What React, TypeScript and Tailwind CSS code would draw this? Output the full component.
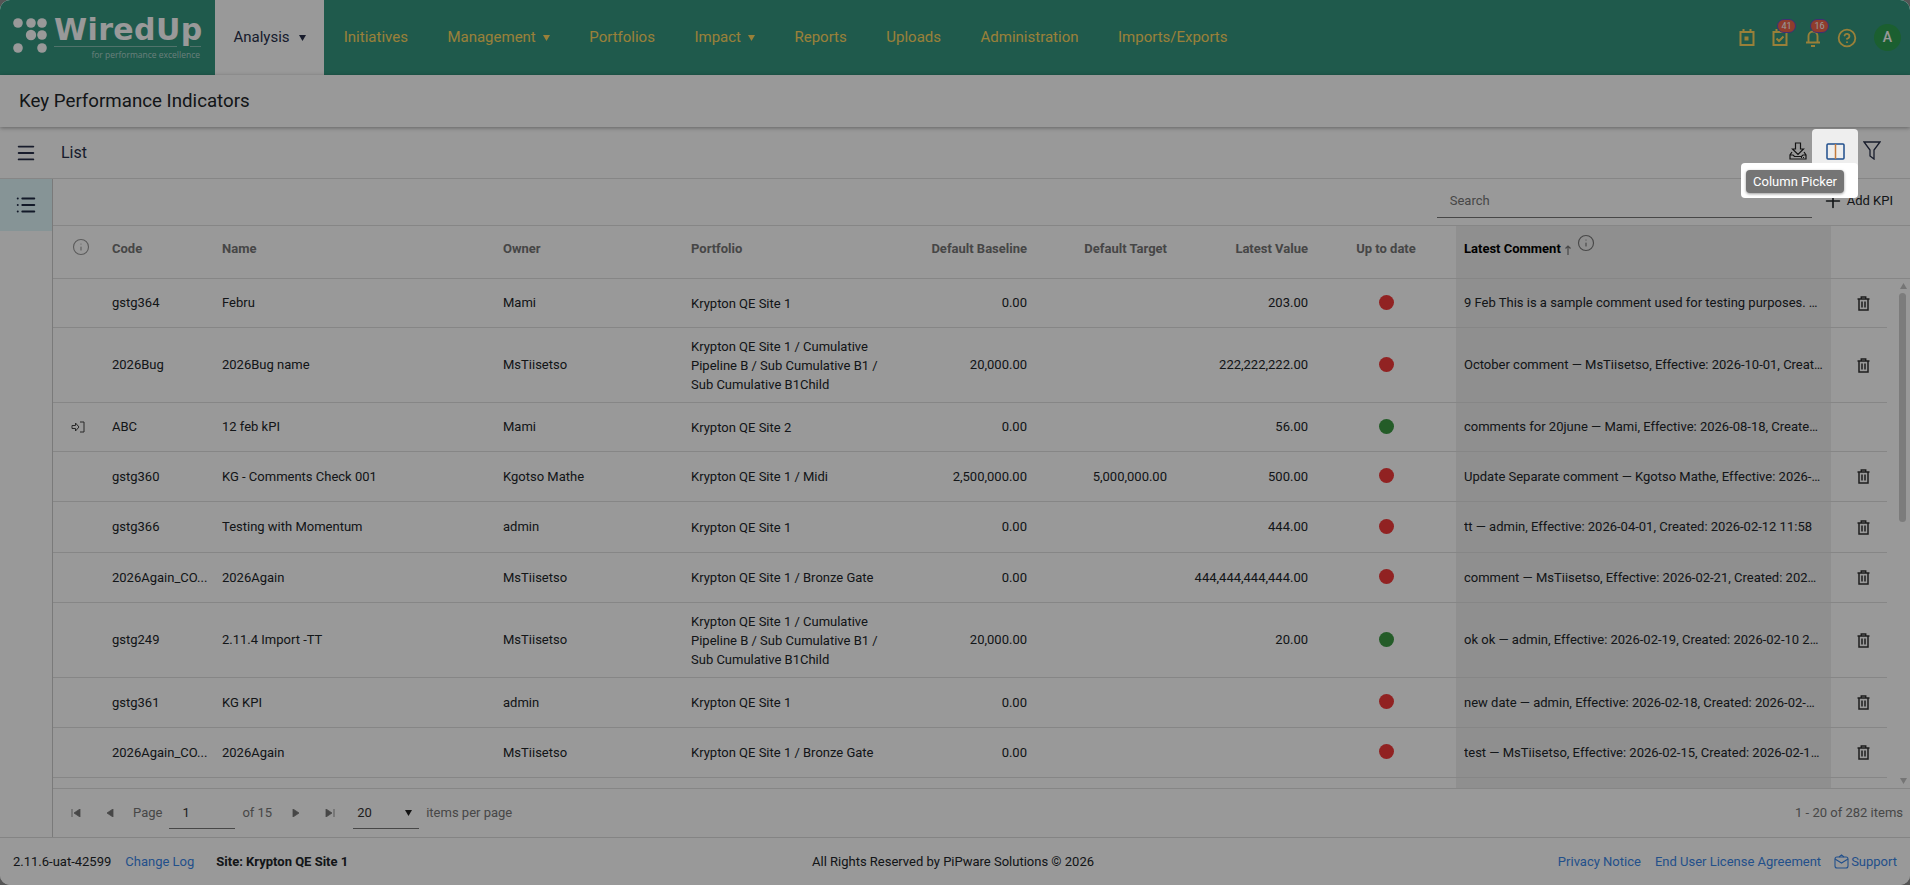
import { CircleHelp, Info, List, Menu, Plus } from "lucide-react";

const cols = "grid grid-cols-[47px_110px_281px_188px_224px_136px_140px_141px_136px_375px_56px]";

const rows = [
  { code: "gstg364", name: "Febru", owner: "Mami", portfolio: ["Krypton QE Site 1"], base: "0.00", target: "", value: "203.00", ok: false, comment: "9 Feb This is a sample comment used for testing purposes. This comment is long", h: "h-[49px]" },
  { code: "2026Bug", name: "2026Bug name", owner: "MsTiisetso", portfolio: ["Krypton QE Site 1 / Cumulative", "Pipeline B / Sub Cumulative B1 /", "Sub Cumulative B1Child"], base: "20,000.00", target: "", value: "222,222,222.00", ok: false, comment: "October comment — MsTiisetso, Effective: 2026-10-01, Created: 2026-02-10", h: "h-[75px]" },
  { code: "ABC", name: "12 feb kPI", owner: "Mami", portfolio: ["Krypton QE Site 2"], base: "0.00", target: "", value: "56.00", ok: true, comment: "comments for 20june — Mami, Effective: 2026-08-18, Created: 2026-02-10", h: "h-[49px]", linked: true },
  { code: "gstg360", name: "KG - Comments Check 001", owner: "Kgotso Mathe", portfolio: ["Krypton QE Site 1 / Midi"], base: "2,500,000.00", target: "5,000,000.00", value: "500.00", ok: false, comment: "Update Separate comment — Kgotso Mathe, Effective: 2026-02-12, Created", h: "h-[50px]" },
  { code: "gstg366", name: "Testing with Momentum", owner: "admin", portfolio: ["Krypton QE Site 1"], base: "0.00", target: "", value: "444.00", ok: false, comment: "tt — admin, Effective: 2026-04-01, Created: 2026-02-12 11:58", h: "h-[51px]" },
  { code: "2026Again_CO...", name: "2026Again", owner: "MsTiisetso", portfolio: ["Krypton QE Site 1 / Bronze Gate"], base: "0.00", target: "", value: "444,444,444,444.00", ok: false, comment: "comment — MsTiisetso, Effective: 2026-02-21, Created: 2026-02-10 12:00:00", h: "h-[50px]" },
  { code: "gstg249", name: "2.11.4 Import -TT", owner: "MsTiisetso", portfolio: ["Krypton QE Site 1 / Cumulative", "Pipeline B / Sub Cumulative B1 /", "Sub Cumulative B1Child"], base: "20,000.00", target: "", value: "20.00", ok: true, comment: "ok ok — admin, Effective: 2026-02-19, Created: 2026-02-10 21:14:00 and more", h: "h-[75px]" },
  { code: "gstg361", name: "KG KPI", owner: "admin", portfolio: ["Krypton QE Site 1"], base: "0.00", target: "", value: "", ok: false, comment: "new date — admin, Effective: 2026-02-18, Created: 2026-02-…", h: "h-[50px]" },
  { code: "2026Again_CO...", name: "2026Again", owner: "MsTiisetso", portfolio: ["Krypton QE Site 1 / Bronze Gate"], base: "0.00", target: "", value: "", ok: false, comment: "test — MsTiisetso, Effective: 2026-02-15, Created: 2026-02-10 12:00:00 more", h: "h-[50px]" },
];

const nav = [
  { label: "Initiatives" },
  { label: "Management", caret: true },
  { label: "Portfolios" },
  { label: "Impact", caret: true },
  { label: "Reports" },
  { label: "Uploads" },
  { label: "Administration" },
  { label: "Imports/Exports" },
];

function Caret({ className }: { className: string }) {
  return (
    <svg width="7" height="6" viewBox="0 0 7 6" className={className}>
      <path d="M0 0h7L3.5 6z" fill="currentColor" />
    </svg>
  );
}

function Logo() {
  return (
    <div className="relative w-[215px] h-[75px] shrink-0">
      <svg width="50" height="50" viewBox="0 0 50 50" className="absolute left-[11px] top-[16px] text-white">
        <g fill="currentColor">
          <circle cx="7" cy="7" r="4.8" />
          <circle cx="20" cy="7" r="4.8" />
          <circle cx="31" cy="7" r="4.8" />
          <circle cx="20" cy="19" r="5.2" />
          <circle cx="31" cy="19" r="4.8" />
          <circle cx="7" cy="32" r="4.8" />
          <circle cx="31" cy="32" r="4.8" />
        </g>
      </svg>
      <span className="absolute left-[54px] top-[12px] font-['DejaVu_Sans',sans-serif] font-bold text-[30px] leading-[36px] tracking-[0.4px] text-white">WiredUp</span>
      <div className="absolute left-[54px] top-[46px] w-[123px] h-px bg-white/40" />
      <div className="absolute left-[190px] top-[46px] w-[11px] h-px bg-white/40" />
      <span className="absolute right-[15px] top-[49px] font-['Open_Sans',sans-serif] text-[8.5px] leading-[12px] text-white/60">for performance excellence</span>
    </div>
  );
}

function Badge({ text }: { text: string }) {
  return (
    <span className="absolute left-[6px] -top-[10px] w-[19px] h-[14px] rounded-full bg-[#f0654a] border border-[#6a4fc0] text-white text-[9px] leading-[12px] text-center">
      {text}
    </span>
  );
}

function HeaderIcons() {
  return (
    <div className="ml-auto flex items-center text-[#ffd65f]">
      <svg width="18" height="18" viewBox="0 0 18 18" fill="none" stroke="currentColor" strokeWidth="2" className="mr-[15px]">
        <rect x="2.5" y="3" width="13" height="13" />
        <path d="M5.5 0v3M12.5 0v3" />
        <rect x="6.5" y="7.5" width="4" height="4" fill="currentColor" stroke="none" />
      </svg>
      <div className="relative mr-[15px]">
        <svg width="18" height="18" viewBox="0 0 18 18" fill="none" stroke="currentColor" strokeWidth="2" className="block">
          <rect x="2.5" y="3" width="13" height="13" />
          <path d="M5.5 0v3M12.5 0v3" />
          <path d="M5.5 9.5l2.5 2.5 4.5-4.5" />
        </svg>
        <Badge text="41" />
      </div>
      <div className="relative mr-[15px]">
        <svg width="18" height="18" viewBox="0 0 18 18" fill="none" stroke="currentColor" strokeWidth="1.9" className="block">
          <path d="M4.5 13V7a4.5 4.5 0 0 1 9 0v6M2 13.5h14M7 17h4" />
          <path d="M9 0v2.5" />
        </svg>
        <Badge text="16" />
      </div>
      <CircleHelp size={20} strokeWidth={2.2} className="mr-[17px]" />
      <div className="w-[27px] h-[27px] rounded-full bg-[#2e9e50] text-white text-[14px] font-medium flex items-center justify-center">A</div>
    </div>
  );
}

function TrashIcon() {
  return (
    <svg width="13" height="15" viewBox="0 0 13 15" fill="none" stroke="currentColor" strokeWidth="1.5">
      <path d="M0.5 3h12M4.3 3V1h4.4v2M2 3v11h9V3M5 5.5v6M8 5.5v6" />
    </svg>
  );
}

function Pager({ d }: { d: string }) {
  return (
    <svg width="10" height="8" viewBox="0 0 10 8" fill="currentColor" stroke="currentColor" strokeWidth="0.8">
      <path d={d} />
    </svg>
  );
}

export default function App() {
  return (
    <div className="relative w-[1910px] h-[885px] overflow-hidden bg-[#555] font-['Roboto',sans-serif] text-[13px] text-[#212529]">
      <div className="h-full flex flex-col bg-white rounded-[10px] overflow-hidden">
        <header className="h-[75px] shrink-0 bg-[#34967f] flex items-stretch pr-[9px]">
          <Logo />
          <div className="w-[109px] bg-white flex items-center justify-center gap-[9px] text-[15px] text-[#28304a]">
            Analysis <Caret className="text-[#28304a]" />
          </div>
          <nav className="flex items-center text-[15px] text-[#ffd65f]">
            {nav.map((n) => (
              <div key={n.label} className="flex items-center gap-[7px] px-[19.75px]">
                {n.label}
                {n.caret && <Caret className="text-[#ffd65f]" />}
              </div>
            ))}
          </nav>
          <HeaderIcons />
        </header>

        <div className="relative z-10 h-[52px] shrink-0 px-[19px] flex items-center text-[18.72px] bg-white shadow-[0_1px_4px_rgba(0,0,0,0.35)]">
          Key Performance Indicators
        </div>

        <div className="h-[52px] shrink-0 flex items-center border-b border-[#e0e0e0]">
          <Menu size={22} className="ml-[15px] text-[#28304a]" />
          <span className="ml-[24px] mt-[1px] text-[16px] text-[#28304a]">List</span>
          <div className="ml-auto flex items-center">
            <svg width="18" height="18" viewBox="0 0 18 18" fill="none" stroke="#222" strokeWidth="1.2" className="mr-[5px] -mt-[4px]">
              <path d="M6.5 1h5v6h3l-5.5 5.5L3.5 7h3z" />
              <path d="M3 10l-2 3v4h16v-4l-2-3M1 13h3l1.5 1.5h7L14 13h3M12 15.5h1M14 15.5h1" />
            </svg>
            <div className="w-[46px] h-[49px]" />
            <svg width="18" height="19" viewBox="0 0 18 19" fill="none" stroke="#28304a" strokeWidth="1.3" className="ml-[5px] mr-[29px] -mt-[5px]">
              <path d="M1 1h16l-6 8v9l-4-3V9z" />
            </svg>
          </div>
        </div>

        <div className="flex-1 flex min-h-0">
          <aside className="w-[53px] shrink-0 border-r border-[#ccc]">
            <div className="h-[52px] bg-[#e0f7fa] flex items-center justify-center">
              <List size={22} strokeWidth={2.2} className="text-[#1f2a44]" />
            </div>
          </aside>

          <main className="flex-1 min-w-0 flex flex-col">
            <div className="h-[47px] shrink-0 flex items-center border-b border-[#e0e0e0]">
              <div className="ml-auto mb-[3px] pt-[2px] w-[375px] h-[34px] border-b border-[#777] flex items-center px-[13px] text-[#777] text-[13px]">Search</div>
              <div className="flex items-center gap-[3px] ml-[10px] mr-[17px] mb-[2px] text-[13px]">
                <Plus size={22} strokeWidth={1.8} /> Add KPI
              </div>
            </div>

            <div className={`${cols} h-[53px] shrink-0 border-b border-[#e0e0e0] font-bold text-[#757575]`}>
              <div className="flex pt-[12px] justify-center pl-[8px]">
                <Info size={18} strokeWidth={1.5} className="text-[#999]" />
              </div>
              <div className="pt-[13px] px-[12px]">Code</div>
              <div className="pt-[13px] px-[12px]">Name</div>
              <div className="pt-[13px] px-[12px]">Owner</div>
              <div className="pt-[13px] px-[12px]">Portfolio</div>
              <div className="pt-[13px] px-[12px] text-right">Default Baseline</div>
              <div className="pt-[13px] px-[12px] text-right">Default Target</div>
              <div className="pt-[13px] px-[12px] text-right">Latest Value</div>
              <div className="pt-[13px] pr-[4px] text-center">Up to date</div>
              <div className="pt-[13px] px-[8px] bg-[#eee] text-black flex items-start">
                <span>Latest Comment</span>
                <svg width="6" height="10" viewBox="0 0 6 10" fill="none" stroke="#777" strokeWidth="1.2" className="ml-[4px] mt-[6px]">
                  <path d="M3 10V1M0.5 3.5L3 1l2.5 2.5" />
                </svg>
                <Info size={18} strokeWidth={1.5} className="text-[#777] ml-[6px] -mt-[5px]" />
              </div>
              <div />
            </div>

            <div className="flex-1 min-h-0 flex overflow-hidden border-b border-[#e0e0e0]">
              <div className="w-[1834px] shrink-0">
                {rows.map((r, i) => (
                  <div key={i} className={`${cols} ${r.h} border-b border-[#e0e0e0] items-stretch`}>
                    <div className="flex items-center justify-center pl-[3px] text-[#444]">
                      {r.linked && (
                        <svg width="14" height="12" viewBox="0 0 14 12" fill="none" stroke="currentColor" strokeWidth="1">
                          <path d="M1 4.5h3.5V2L8 6l-3.5 4V7.5H1zM9 1h4v10H9" />
                        </svg>
                      )}
                    </div>
                    <div className="flex items-center px-[12px] whitespace-nowrap">{r.code}</div>
                    <div className="flex items-center px-[12px]">{r.name}</div>
                    <div className="flex items-center px-[12px]">{r.owner}</div>
                    <div className="flex flex-col justify-center px-[12px] leading-[19px]">
                      {r.portfolio.map((p) => (
                        <div key={p} className="whitespace-nowrap">{p}</div>
                      ))}
                    </div>
                    <div className="flex items-center justify-end px-[12px]">{r.base}</div>
                    <div className="flex items-center justify-end px-[12px]">{r.target}</div>
                    <div className="flex items-center justify-end px-[12px]">{r.value}</div>
                    <div className="flex items-center justify-center pr-[4px] -mt-[2px]">
                      <span className={r.ok ? "w-[15px] h-[15px] rounded-full bg-[#3c9a44]" : "w-[15px] h-[15px] rounded-full bg-[#f23a3a]"} />
                    </div>
                    <div className="flex items-center px-[8px] bg-[#eee] min-w-0">
                      <span className="truncate">{r.comment}</span>
                    </div>
                    <div className="flex items-center justify-center pl-[8px] text-[#333]">
                      {!r.linked && <TrashIcon />}
                    </div>
                  </div>
                ))}
                <div className={`${cols} h-[11px]`}>
                  <div className="col-start-10 bg-[#eee]" />
                </div>
              </div>
              <div className="w-[23px] shrink-0 pl-[10px]">
                <div className="relative h-full flex flex-col items-center justify-between py-[4px] text-[#c4c4c4]">
                  <Caret className="rotate-180 text-[#c4c4c4]" />
                  <div className="absolute left-[2px] w-[7px] top-[14px] h-[229px] rounded-full bg-[#cfcfcf]" />
                  <Caret className="text-[#c4c4c4]" />
                </div>
              </div>
            </div>

            <div className="h-[48px] shrink-0 flex items-center pl-[18px] pr-[7px] text-[#777] text-[13px]">
              <div className="flex items-center gap-[25px]">
                <Pager d="M1 0v8M9 0v8L3 4z" />
                <Pager d="M7 0v8L1 4z" />
              </div>
              <span className="ml-[17px]">Page</span>
              <div className="ml-[7px] w-[66px] h-[32px] border-b border-[#777] pl-[13px] pt-[6px] text-[#333]">1</div>
              <span className="ml-[7px]">of 15</span>
              <div className="ml-[20px] flex items-center gap-[23px]">
                <Pager d="M1 0v8l6-4z" />
                <Pager d="M1 0v8l6-4zM9 0v8" />
              </div>
              <div className="ml-[18px] w-[66px] h-[32px] border-b border-[#777] pl-[4px] pt-[6px] text-[#333] flex justify-between pr-[7px]">
                20 <Caret className="text-[#222] mt-[7px]" />
              </div>
              <span className="ml-[7px]">items per page</span>
              <span className="ml-auto">1 - 20 of 282 items</span>
            </div>
          </main>
        </div>

        <footer className="h-[48px] shrink-0 flex items-center px-[13px] border-t border-[#ddd] text-[13px] relative">
          <span>2.11.6-uat-42599</span>
          <span className="ml-[14px] text-[#3a86e8]">Change Log</span>
          <span className="ml-[22px] font-bold">Site: Krypton QE Site 1</span>
          <span className="absolute left-[812px]">All Rights Reserved by PiPware Solutions © 2026</span>
          <span className="ml-auto text-[#3a86e8]">Privacy Notice</span>
          <span className="ml-[14px] text-[#3a86e8]">End User License Agreement</span>
          <span className="ml-[13px] text-[#3a86e8] flex items-center gap-[2px]">
            <svg width="15" height="15" viewBox="0 0 15 15" fill="none" stroke="currentColor" strokeWidth="1.1">
              <rect x="1" y="3" width="13" height="11" rx="2" />
              <path d="M5 3l2.5-2L10 3M1 5l6.5 4L14 5" />
            </svg>
            Support
          </span>
        </footer>
      </div>

      {/* dim layer of the guided tour, with the spotlit button and tooltip above it */}
      <div className="absolute inset-0 z-20 bg-black/40 rounded-[10px]" />
      <div className="absolute z-30 left-[1812px] top-[129px] w-[46px] h-[50px] rounded-t-[4px] bg-[#eee] flex items-center justify-center pb-[5px]">
        <svg width="19" height="17" viewBox="0 0 19 17" fill="none" stroke="#1f4e8c" strokeWidth="1.5">
          <rect x="1" y="1" width="17" height="15" rx="1" />
          <path d="M9.5 1v15" stroke="#c47a3a" />
        </svg>
      </div>
      <div className="absolute z-30 left-[1741px] top-[163px] w-[117px] h-[35px] rounded-[4px] bg-white" />
      <div className="absolute z-30 left-[1746px] top-[170px] w-[98px] h-[23px] rounded-[4px] bg-[#757575] shadow-[0_1px_3px_rgba(0,0,0,0.4)] text-white text-[13px] flex items-center justify-center">
        Column Picker
      </div>
    </div>
  );
}
